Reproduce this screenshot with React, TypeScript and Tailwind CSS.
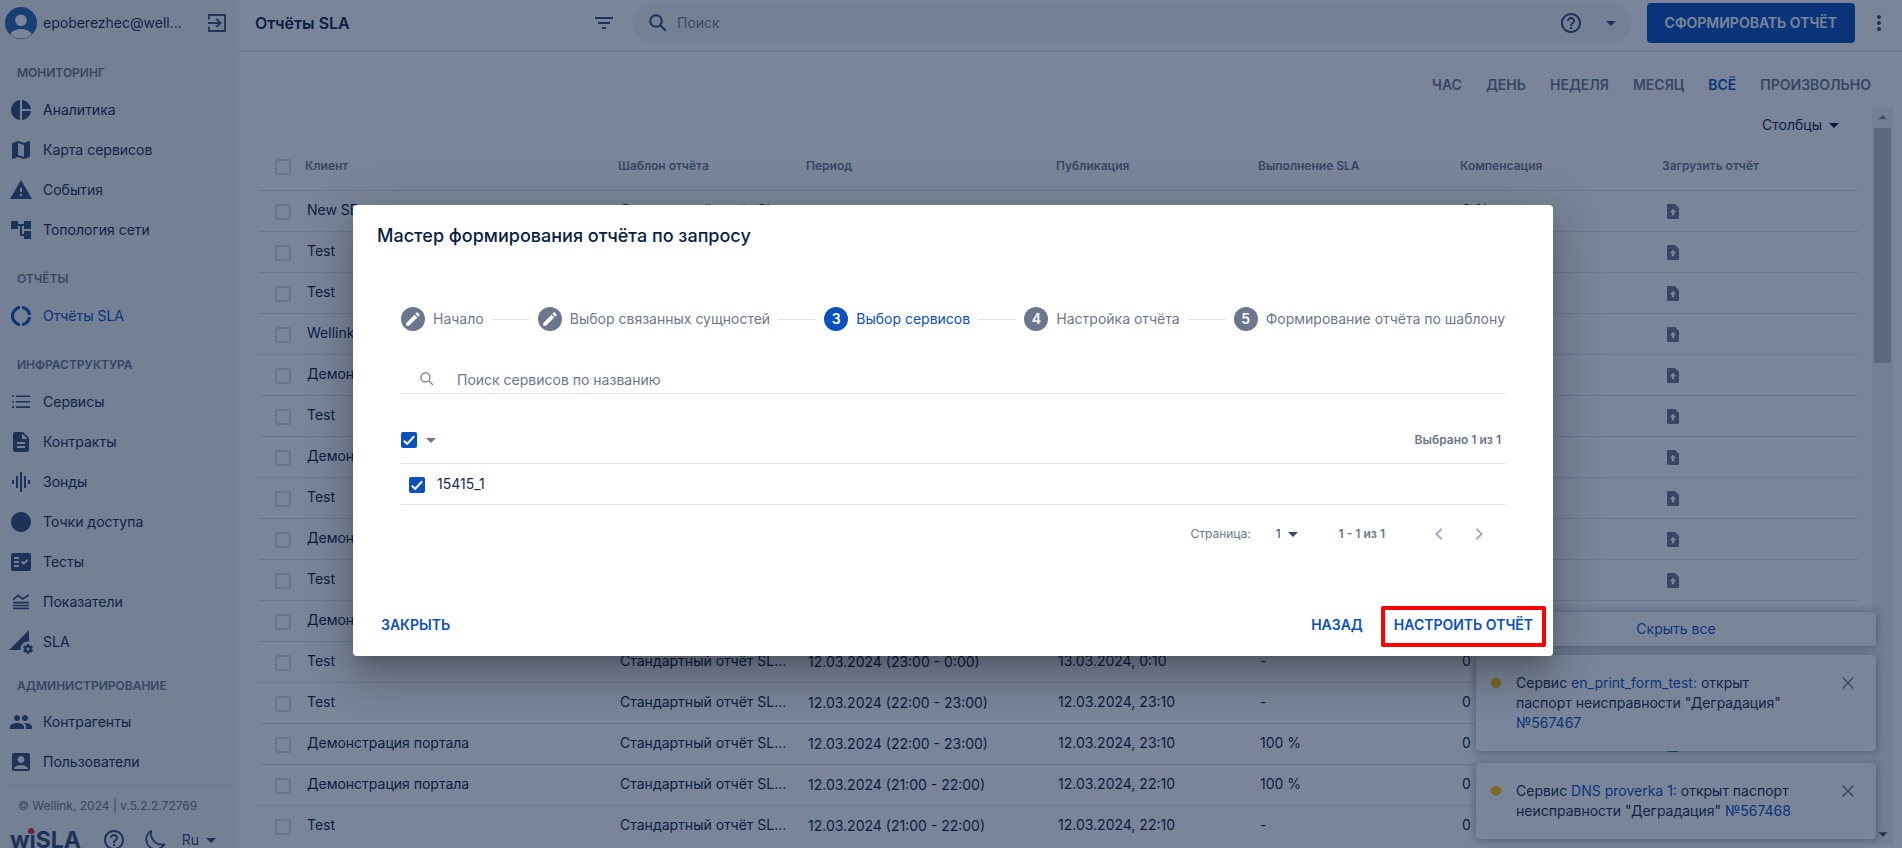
import React from "react";
import {
  MdAccountBox,
  MdAccountTree,
  MdArrowDropDown,
  MdArrowDropUp,
  MdChevronLeft,
  MdChevronRight,
  MdCircle,
  MdDescription,
  MdDonutLarge,
  MdEdit,
  MdFactCheck,
  MdFilterList,
  MdGraphicEq,
  MdHelpOutline,
  MdMap,
  MdMoreVert,
  MdPeople,
  MdPermDataSetting,
  MdPieChart,
  MdWarning,
} from "react-icons/md";

type IconType = React.ComponentType<{ className?: string }>;

function ListIcon({ className }: { className?: string }) {
  return (
    <svg viewBox="0 0 24 24" className={className} fill="currentColor" aria-hidden="true">
      <path d="M3 5.5h2v1.6H3zM7 5.5h14v1.6H7zM3 10.9h2v1.6H3zM7 10.9h14v1.6H7zM3 16.3h2v1.6H3zM7 16.3h14v1.6H7z" />
    </svg>
  );
}

function MetricsIcon({ className }: { className?: string }) {
  return (
    <svg viewBox="0 0 24 24" className={className} fill="none" stroke="currentColor" strokeWidth="1.7" aria-hidden="true">
      <path d="M4.3 9.6 9 5.4l4.6 3.6 6.2-4" />
      <path d="M4 12.6h16M4 15.5h16M4 18.4h16" />
    </svg>
  );
}

function SearchIcon({ className, strokeWidth }: { className?: string; strokeWidth: number }) {
  return (
    <svg viewBox="0 0 18 18" className={className} fill="none" stroke="currentColor" strokeWidth={strokeWidth} aria-hidden="true">
      <circle cx="7" cy="7" r="5.8" />
      <path d="m11.2 11.2 5.6 5.6" />
    </svg>
  );
}

function LogoutIcon({ className }: { className?: string }) {
  return (
    <svg viewBox="0 0 20 20" className={className} fill="none" stroke="currentColor" strokeWidth="1.8" aria-hidden="true">
      <path d="M2 6.5V2h16v16H2v-4.5" />
      <path d="M1 10h12M9.3 5.8 13.5 10l-4.2 4.2" />
    </svg>
  );
}

function MoonIcon({ className }: { className?: string }) {
  return (
    <svg viewBox="0 0 22 22" className={className} fill="none" stroke="currentColor" strokeWidth="1.7" strokeLinejoin="round" aria-hidden="true">
      <path d="M7.3 1.8A9.8 9.8 0 1 0 20.5 15.3C12 17.5 5.5 9.5 7.3 1.8Z" />
    </svg>
  );
}

function FileUpIcon({ className }: { className?: string }) {
  return (
    <svg viewBox="0 0 12 15" className={className} aria-hidden="true">
      <path fill="currentColor" d="M1.2 0H8l4 4v9.8c0 .7-.5 1.2-1.2 1.2H1.2C.5 15 0 14.5 0 13.8V1.2C0 .5.5 0 1.2 0Z" />
      <path fill="#fff" d="M6 4.8 9.2 8.2H7.2v3H4.8v-3h-2z" />
    </svg>
  );
}

function CrossIcon({ className }: { className?: string }) {
  return (
    <svg viewBox="0 0 12 12" className={className} stroke="currentColor" strokeWidth="1.4" aria-hidden="true">
      <path d="m.6.6 10.8 10.8M11.4.6.6 11.4" />
    </svg>
  );
}

function Avatar() {
  return (
    <svg viewBox="0 0 32 32" className="size-8 shrink-0" aria-hidden="true">
      <defs>
        <clipPath id="avatar-clip">
          <circle cx="16" cy="16" r="15.5" />
        </clipPath>
      </defs>
      <circle cx="16" cy="16" r="16" fill="#2a68ae" />
      <g clipPath="url(#avatar-clip)" fill="#fff">
        <circle cx="16" cy="13.3" r="5.8" />
        <path d="M4.5 29c1.5-5 6.5-7 11.5-7s10 2 11.5 7L16 34Z" />
      </g>
    </svg>
  );
}

const groups: { title: string; compact?: boolean; items: { label: string; icon: IconType; active?: boolean }[] }[] = [
  {
    title: "МОНИТОРИНГ",
    items: [
      { label: "Аналитика", icon: MdPieChart },
      { label: "Карта сервисов", icon: MdMap },
      { label: "События", icon: MdWarning },
      { label: "Топология сети", icon: MdAccountTree },
    ],
  },
  { title: "ОТЧЁТЫ", items: [{ label: "Отчёты SLA", icon: MdDonutLarge, active: true }] },
  {
    title: "ИНФРАСТРУКТУРА",
    items: [
      { label: "Сервисы", icon: ListIcon },
      { label: "Контракты", icon: MdDescription },
      { label: "Зонды", icon: MdGraphicEq },
      { label: "Точки доступа", icon: MdCircle },
      { label: "Тесты", icon: MdFactCheck },
      { label: "Показатели", icon: MetricsIcon },
      { label: "SLA", icon: MdPermDataSetting },
    ],
  },
  {
    title: "АДМИНИСТРИРОВАНИЕ",
    compact: true,
    items: [
      { label: "Контрагенты", icon: MdPeople },
      { label: "Пользователи", icon: MdAccountBox },
    ],
  },
];

const template = "Стандартный отчёт SL...";

const rows: { client: string; period?: string; published?: string; sla?: string }[] = [
  { client: "New SE" },
  { client: "Test" },
  { client: "Test" },
  { client: "Wellink" },
  { client: "Демонстрация портала" },
  { client: "Test" },
  { client: "Демонстрация портала" },
  { client: "Test" },
  { client: "Демонстрация портала" },
  { client: "Test" },
  { client: "Демонстрация портала" },
  { client: "Test", period: "12.03.2024 (23:00 - 0:00)", published: "13.03.2024, 0:10", sla: "-" },
  { client: "Test", period: "12.03.2024 (22:00 - 23:00)", published: "12.03.2024, 23:10", sla: "-" },
  { client: "Демонстрация портала", period: "12.03.2024 (22:00 - 23:00)", published: "12.03.2024, 23:10", sla: "100 %" },
  { client: "Демонстрация портала", period: "12.03.2024 (21:00 - 22:00)", published: "12.03.2024, 22:10", sla: "100 %" },
  { client: "Test", period: "12.03.2024 (21:00 - 22:00)", published: "12.03.2024, 22:10", sla: "-" },
];

const steps = [
  { label: "Начало", mark: "done" },
  { label: "Выбор связанных сущностей", mark: "done" },
  { label: "Выбор сервисов", mark: "3" },
  { label: "Настройка отчёта", mark: "4" },
  { label: "Формирование отчёта по шаблону", mark: "5" },
];

const periods = ["ЧАС", "ДЕНЬ", "НЕДЕЛЯ", "МЕСЯЦ", "ВСЁ", "ПРОИЗВОЛЬНО"];

function EmptyCheckbox({ label }: { label: string }) {
  return (
    <input
      type="checkbox"
      aria-label={label}
      className="block size-4 appearance-none rounded-xs border-2 border-[#d9dce3] bg-transparent"
    />
  );
}

function CheckedCheckbox({ label }: { label: string }) {
  return (
    <span className="grid size-4 shrink-0 place-items-center">
      <input
        type="checkbox"
        defaultChecked
        aria-label={label}
        className="col-start-1 row-start-1 size-4 appearance-none rounded-xs bg-[#0c50bb]"
      />
      <svg viewBox="0 0 16 16" className="pointer-events-none col-start-1 row-start-1 size-4" fill="none" stroke="#fff" strokeWidth="2" aria-hidden="true">
        <path d="m2.8 8.6 3.4 3.3 7-7.6" />
      </svg>
    </span>
  );
}

function Sidebar() {
  return (
    <aside className="flex w-[239px] shrink-0 flex-col bg-[#f1f3f5] text-[#172b4d]">
      <div className="flex h-11 shrink-0 items-center gap-1.5 pt-0.5 pr-3 pl-[5px]">
        <Avatar />
        <span className="flex-1 text-sm">epoberezhec@well...</span>
        <button type="button" aria-label="Выйти" className="text-[#42526e]">
          <LogoutIcon className="size-5" />
        </button>
      </div>
      <nav>
        {groups.map((g) => (
          <section key={g.title}>
            <h2
              className={
                g.compact
                  ? "flex h-10 items-center pt-2 pl-[17px] text-xs font-semibold text-[#6b778c]"
                  : "flex h-[46px] items-center pt-3 pl-[17px] text-xs font-semibold text-[#6b778c]"
              }
            >
              {g.title}
            </h2>
            {g.items.map((it) => (
              <a
                key={it.label}
                href="#"
                className={
                  it.active
                    ? "flex h-10 items-center gap-2.5 pl-[9px] text-sm text-[#0c50bb]"
                    : "flex h-10 items-center gap-2.5 pl-[9px] text-sm"
                }
              >
                <it.icon className={it.active ? "size-6 text-[#0c50bb]" : "size-6 text-[#344a75]"} />
                {it.label}
              </a>
            ))}
          </section>
        ))}
      </nav>
      <div className="mx-2 mt-0.5 border-t-2 border-[#e9ebee] pt-2.5 pl-2.5 text-xs leading-5 text-[#6b778c]">
        © Wellink, 2024 | v.5.2.2.72769
      </div>
      <div className="mt-2 flex h-10 items-center pl-2.5 text-[#344a75]">
        <span className="relative text-[23px] leading-8 font-bold">
          wiSLA
          <span className="absolute top-1 left-[18px] size-1.5 rounded-full bg-[#e02b2b]" />
        </span>
        <button type="button" aria-label="Справка" className="ml-auto">
          <MdHelpOutline className="size-6" />
        </button>
        <button type="button" aria-label="Тёмная тема" className="ml-[18px]">
          <MoonIcon className="size-[22px]" />
        </button>
        <button type="button" className="mr-4 ml-4 flex items-center text-sm">
          Ru
          <MdArrowDropDown className="size-6" />
        </button>
      </div>
    </aside>
  );
}

function TopBar() {
  return (
    <header className="flex h-[52px] shrink-0 items-start border-b-2 border-[#e8ebee] pt-[3px] pr-[11px] pl-4">
      <h1 className="flex h-10 w-[337px] items-center text-base font-semibold text-[#091e42]">Отчёты SLA</h1>
      <button type="button" aria-label="Фильтр" className="flex h-10 items-center text-[#344a75]">
        <MdFilterList className="size-6" />
      </button>
      <div className="ml-[17px] flex h-10 flex-1 items-center rounded-full bg-[#f1f3f5] pr-2 pl-4 text-[#344a75]">
        <SearchIcon className="size-[18px]" strokeWidth={2} />
        <input
          type="text"
          aria-label="Поиск"
          placeholder="Поиск"
          className="ml-2.5 flex-1 bg-transparent text-sm outline-none placeholder:text-[#7a7f8a]"
        />
        <button type="button" aria-label="Подсказка">
          <MdHelpOutline className="size-6" />
        </button>
        <button type="button" aria-label="Варианты поиска" className="ml-4">
          <MdArrowDropDown className="size-6" />
        </button>
      </div>
      <button type="button" className="ml-4 flex h-10 items-center rounded bg-[#0c50bb] px-[18px] text-sm font-semibold text-white">
        СФОРМИРОВАТЬ ОТЧЁТ
      </button>
      <button type="button" aria-label="Меню" className="ml-3 flex h-10 items-center text-[#344a75]">
        <MdMoreVert className="size-6" />
      </button>
    </header>
  );
}

function ReportsTable() {
  return (
    <table className="w-full table-fixed border-separate border-spacing-0 text-left text-sm text-[#091e42]">
      <colgroup>
        <col className="w-10" />
        <col />
        <col className="w-[188px]" />
        <col className="w-[250px]" />
        <col className="w-[202px]" />
        <col className="w-[202px]" />
        <col className="w-[202px]" />
        <col className="w-[202px]" />
      </colgroup>
      <thead>
        <tr className="h-[50px] text-xs text-[#6b778c] [&>th]:border-b [&>th]:border-[#dfe1e6] [&>th]:pl-1.5 [&>th]:font-semibold">
          <th className="pt-0.5">
            <div className="pl-2.5">
              <EmptyCheckbox label="Выбрать все отчёты" />
            </div>
          </th>
          <th>Клиент</th>
          <th>Шаблон отчёта</th>
          <th>Период</th>
          <th>Публикация</th>
          <th>Выполнение SLA</th>
          <th>Компенсация</th>
          <th>Загрузить отчёт</th>
        </tr>
      </thead>
      <tbody>
        {rows.map((r, i) => (
          <tr key={i} className="h-[41px] whitespace-nowrap [&>td]:border-b [&>td]:border-[#dfe1e6] [&>td]:pl-2">
            <td className="pt-0.5">
              <div className="pl-2">
                <EmptyCheckbox label={r.client} />
              </div>
            </td>
            <td className="pb-0.5">{r.client}</td>
            <td className="pb-0.5">{template}</td>
            <td>{r.period}</td>
            <td className="pb-0.5">{r.published}</td>
            <td className="pb-0.5">{r.sla}</td>
            <td className="pb-0.5">0 %</td>
            <td>
              <button type="button" aria-label="Загрузить отчёт" className="ml-[3px] block text-[#6b778c]">
                <FileUpIcon className="h-[15px] w-3" />
              </button>
            </td>
          </tr>
        ))}
      </tbody>
    </table>
  );
}

function Main() {
  return (
    <main className="flex min-w-0 flex-1 flex-col bg-white">
      <TopBar />
      <div className="flex h-[55px] shrink-0 items-center justify-end gap-6 pt-2.5 pr-[31px] text-sm font-semibold">
        {periods.map((p) => (
          <button key={p} type="button" className={p === "ВСЁ" ? "text-[#0c50bb]" : "text-[#6b778c]"}>
            {p}
          </button>
        ))}
      </div>
      <div className="flex min-h-0 flex-1 pr-[9px] pb-[3px] pl-5">
        <div className="min-w-0 flex-1 overflow-hidden pr-[14px]">
          <div className="flex h-[34px] items-center justify-end pt-0.5 pr-3">
            <button type="button" className="flex items-center text-sm text-[#091e42]">
              Столбцы
              <MdArrowDropDown className="size-6" />
            </button>
          </div>
          <ReportsTable />
        </div>
        <div className="flex w-[21px] shrink-0 flex-col items-center bg-[#f1f1f1] text-[#505050]">
          <MdArrowDropUp className="size-[21px] shrink-0 text-[#8a8a8a]" />
          <div className="h-[235px] w-[17px] shrink-0 bg-[#c1c1c1]" />
          <MdArrowDropDown className="mt-auto size-[22px] shrink-0" />
        </div>
      </div>
    </main>
  );
}

function Toast({ children }: { children: React.ReactNode }) {
  return (
    <div className="flex items-start rounded bg-white pt-[18px] pr-[22px] pb-[18px] pl-[15px] shadow-[0_1px_10px_rgba(9,30,66,0.45)]">
      <span className="mt-[5px] size-2.5 shrink-0 rounded-full bg-[#ffc400]" />
      <p className="mr-12 ml-[15px] flex-1 text-sm leading-5 text-[#172b4d] [&>a]:text-[#0c50bb]">{children}</p>
      <button type="button" aria-label="Закрыть уведомление" className="mt-1 text-[#6b778c]">
        <CrossIcon className="size-3" />
      </button>
    </div>
  );
}

function Toasts() {
  return (
    <div className="absolute right-[26px] bottom-[9px] flex w-[400px] flex-col">
      <button
        type="button"
        className="mb-[9px] h-[34px] rounded bg-white text-sm text-[#0c50bb] shadow-[0_1px_10px_rgba(9,30,66,0.45)]"
      >
        Скрыть все
      </button>
      <div className="flex flex-col gap-3">
        <Toast>
          Сервис <a href="#">en_print_form_test:</a> открыт паспорт неисправности "Деградация" <a href="#">№567467</a>
        </Toast>
        <Toast>
          Сервис <a href="#">DNS proverka 1:</a> открыт паспорт неисправности "Деградация" <a href="#">№567468</a>
        </Toast>
      </div>
    </div>
  );
}

function Dialog() {
  return (
    <div
      role="dialog"
      aria-labelledby="wizard-title"
      className="flex w-[1200px] flex-col rounded bg-white shadow-[0_11px_15px_-7px_rgba(0,0,0,0.2),0_24px_38px_3px_rgba(0,0,0,0.14),0_9px_46px_8px_rgba(0,0,0,0.12)]"
    >
      <h2 id="wizard-title" className="px-6 pt-[17px] text-lg font-medium text-[#091e42]">
        Мастер формирования отчёта по запросу
      </h2>
      <div className="px-12 pt-[57px]">
        <ol className="flex items-center text-sm">
          {steps.map((s, i) => (
            <React.Fragment key={s.label}>
              {i > 0 && <li aria-hidden="true" className="mx-2 h-px flex-1 bg-[#dfe1e6]" />}
              <li className={s.mark === "3" ? "flex items-center gap-2 text-[#0c50bb]" : "flex items-center gap-2 text-[#6b778c]"}>
                <span
                  className={
                    s.mark === "3"
                      ? "flex size-6 items-center justify-center rounded-full bg-[#0c50bb] font-semibold text-white"
                      : "flex size-6 items-center justify-center rounded-full bg-[#6b778c] font-semibold text-white"
                  }
                >
                  {s.mark === "done" ? <MdEdit className="size-[18px]" /> : s.mark}
                </span>
                {s.label}
              </li>
            </React.Fragment>
          ))}
        </ol>
        <div className="mt-9 flex h-[27px] items-center border-b border-[#dfe1e6] pl-[19px] text-[#6b778c]">
          <SearchIcon className="mb-0.5 size-[14px]" strokeWidth={1.6} />
          <input
            type="text"
            aria-label="Поиск сервисов по названию"
            placeholder="Поиск сервисов по названию"
            className="ml-[23px] flex-1 bg-transparent text-sm outline-none placeholder:text-[#6b778c]"
          />
        </div>
        <table className="mt-[23px] w-full table-fixed border-separate border-spacing-0 text-left text-[#172b4d]">
          <colgroup>
            <col className="w-9" />
            <col />
          </colgroup>
          <thead>
            <tr className="h-[47px] [&>th]:border-b [&>th]:border-[#dfe1e6]">
              <th>
                <div className="flex items-center gap-0.5">
                  <CheckedCheckbox label="Выбрать все сервисы" />
                  <button type="button" aria-label="Варианты выбора" className="shrink-0 text-[#6b778c]">
                    <MdArrowDropDown className="size-6" />
                  </button>
                </div>
              </th>
              <th className="pr-1 text-right text-xs font-semibold text-[#6b778c]">Выбрано 1 из 1</th>
            </tr>
          </thead>
          <tbody>
            <tr className="h-[41px] [&>td]:border-b [&>td]:border-[#dfe1e6]">
              <td className="pt-0.5 pl-2">
                <CheckedCheckbox label="15415_1" />
              </td>
              <td className="text-sm">15415_1</td>
            </tr>
          </tbody>
        </table>
        <div className="flex h-[58px] items-center justify-end pr-3.5 text-xs text-[#6b778c]">
          <span>Страница:</span>
          <button type="button" aria-label="Страница 1" className="ml-[25px] flex items-center text-[#344a75]">
            1
            <MdArrowDropDown className="size-6" />
          </button>
          <span className="ml-[34px] font-semibold">1 - 1 из 1</span>
          <button type="button" aria-label="Предыдущая страница" className="ml-[42px] text-[#a5adba]">
            <MdChevronLeft className="size-6" />
          </button>
          <button type="button" aria-label="Следующая страница" className="ml-4 text-[#a5adba]">
            <MdChevronRight className="size-6" />
          </button>
        </div>
      </div>
      <div className="flex items-center pt-[43px] pr-[7px] pb-[9px] pl-7 text-sm font-semibold text-[#0c50bb]">
        <button type="button" className="pb-1">
          ЗАКРЫТЬ
        </button>
        <button type="button" className="mr-[18px] ml-auto pb-1">
          НАЗАД
        </button>
        <button type="button" className="h-[41px] rounded-xs border-4 border-[#ff0000] px-[9px] pb-1">
          НАСТРОИТЬ ОТЧЁТ
        </button>
      </div>
    </div>
  );
}

export default function App() {
  return (
    <div className="relative flex h-screen overflow-hidden bg-white font-['Inter',sans-serif]">
      <Sidebar />
      <Main />
      <Toasts />
      <div className="absolute inset-0 flex items-start justify-center bg-[#091e42]/54 pt-[205px] pl-1">
        <Dialog />
      </div>
    </div>
  );
}
